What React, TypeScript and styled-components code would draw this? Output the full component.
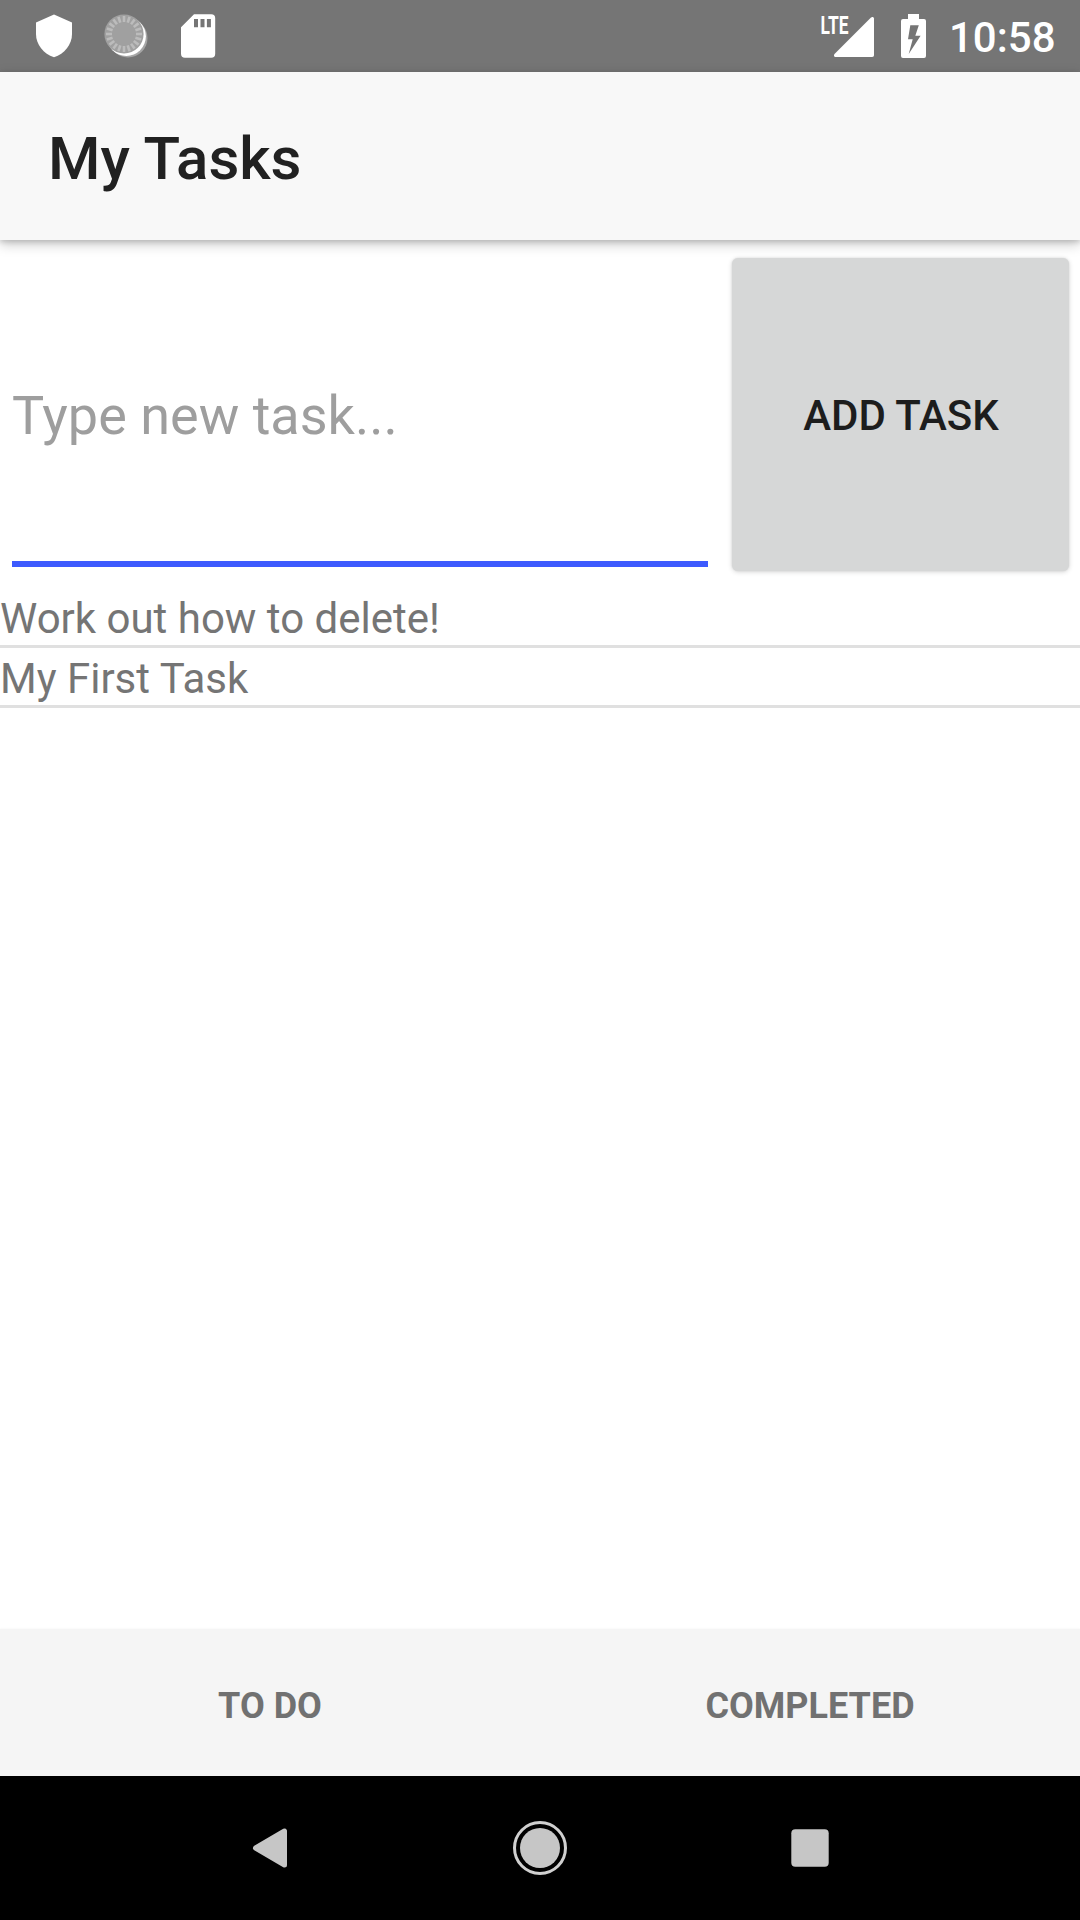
import React from 'react';
import styled, { createGlobalStyle } from 'styled-components';

const GlobalStyle = createGlobalStyle`
  * { box-sizing: border-box; }
  body { margin: 0; background: #fff; font-family: Roboto, sans-serif; }
`;

const Screen = styled.div`
  width: 1080px;
  height: 1920px;
  display: flex;
  flex-direction: column;
  overflow: hidden;
  background: #fff;
`;

const StatusBar = styled.div`
  flex: none;
  height: 72px;
  display: flex;
  justify-content: space-between;
  background: #757575;
`;

const StatusGroup = styled.div`
  display: flex;
  height: 72px;
`;

const Clock = styled.span`
  width: 138px;
  padding: 6px 0 0 7px;
  font-size: 42px;
  font-weight: 500;
  line-height: 63px;
  color: #fff;
`;

const AppBar = styled.header`
  flex: none;
  position: relative;
  z-index: 1;
  height: 168px;
  padding-left: 48px;
  background: #f8f8f8;
  box-shadow: 0 4px 12px rgba(0, 0, 0, 0.22), 0 2px 5px rgba(0, 0, 0, 0.14);
`;

const Title = styled.h1`
  margin: 0;
  padding-top: 3px;
  font-size: 60px;
  font-weight: 500;
  line-height: 168px;
  color: #212121;
`;

const Entry = styled.div`
  flex: none;
  display: flex;
  gap: 24px;
  height: 348px;
  padding: 18px 11px 17px 12px;
`;

const TaskInput = styled.input`
  width: 696px;
  height: 309px;
  padding: 12px 0 0;
  border: 0;
  border-bottom: 6px solid #3d5afe;
  border-radius: 0;
  outline: none;
  background: transparent;
  font: 400 54px Roboto, sans-serif;
  color: #212121;
  &::placeholder { color: #9e9e9e; opacity: 1; }
`;

const AddButton = styled.button`
  width: 337px;
  height: 313px;
  padding: 2px 0 0 1px;
  border: 0;
  border-radius: 6px;
  background: #d6d7d7;
  box-shadow: 0 1px 5px rgba(0, 0, 0, 0.16), 0 0 2px rgba(0, 0, 0, 0.1);
  font: 500 42px Roboto, sans-serif;
  color: #1d1d1d;
`;

const TaskList = styled.ul`
  flex: 1;
  margin: 0;
  padding: 0;
  list-style: none;
`;

const Task = styled.li`
  height: 60px;
  padding-top: 4px;
  border-bottom: 3px solid #e0e0e0;
  font-size: 42px;
  line-height: 53px;
  color: #757575;
`;

const TabBar = styled.nav`
  flex: none;
  display: flex;
  height: 147px;
  background: #f5f5f5;
  box-shadow: 0 0 2px rgba(0, 0, 0, 0.06);
`;

const Tab = styled.button`
  flex: 1;
  padding: 6px 0 0;
  border: 0;
  background: transparent;
  font: 700 36px Roboto, sans-serif;
  color: #717171;
`;

const NavBar = styled.div`
  flex: none;
  height: 144px;
  display: flex;
  justify-content: center;
  background: #000;
`;

const NavCell = styled.div`
  width: 270px;
  display: flex;
  align-items: center;
  justify-content: center;
`;

const TICKS = Array.from({ length: 20 }, (_, i) => i * 18);

const StatusLeft = () => (
  <svg width="240" height="72" viewBox="0 0 240 72">
    <path d="M54 14.6 36 22.4V34c0 10.5 7.5 20 18 23.2C64.500 54 72 44.500 72 34V22.400Z" fill="#fff" />
    <circle cx="128" cy="38" r="19.500" fill="#a6a6a6" />
    <circle cx="126.300" cy="36.300" r="19.600" fill="#fff" />
    <circle cx="124" cy="34" r="19.600" fill="#a0a0a0" />
    {TICKS.map((a) => (
      <path key={a} d="M124 16v6" stroke="#bcbcbc" strokeWidth="2.600" transform={`rotate(${a} 124 34)`} />
    ))}
    <path
      fillRule="evenodd"
      fill="#fff"
      d="M194 14.300h17.200a4 4 0 0 1 4 4V53.700a4 4 0 0 1-4 4H185a4 4 0 0 1-4-4V27.300ZM194 19v8.300h4V19Zm6.500 0v8.300h4V19Zm6.400 0v8.300h4V19Z"
    />
  </svg>
);

const StatusRight = () => (
  <svg width="130" height="72" viewBox="812 0 130 72">
    <text x="820.600" y="33.700" fill="#fff" fontFamily="Roboto, sans-serif" fontWeight="700" fontSize="26.500" textLength="28" lengthAdjust="spacingAndGlyphs">
      LTE
    </text>
    <path d="M835.500 57H872.200A1.800 1.800 0 0 0 874 55.200V18.500C874 16.900 872.200 16.400 871 17.500L834.500 54C833.400 55.200 834 57 835.500 57Z" fill="#fff" />
    <path
      fillRule="evenodd"
      fill="#fff"
      d="M908 14h11v5h5a2 2 0 0 1 2 2V56a2 2 0 0 1-2 2H903a2 2 0 0 1-2-2V21a2 2 0 0 1 2-2h5ZM910.300 25.300 908 39.300h4.700L908.700 54 920.600 35.700h-5.300L918.800 25.300Z"
    />
  </svg>
);

const tasks = ['Work out how to delete!', 'My First Task'];

export default function App() {
  return (
    <>
      <GlobalStyle />
      <Screen>
        <StatusBar>
          <StatusGroup>
            <StatusLeft />
          </StatusGroup>
          <StatusGroup>
            <StatusRight />
            <Clock>10:58</Clock>
          </StatusGroup>
        </StatusBar>
        <AppBar>
          <Title>My Tasks</Title>
        </AppBar>
        <Entry>
          <TaskInput placeholder="Type new task..." />
          <AddButton>ADD TASK</AddButton>
        </Entry>
        <TaskList>
          {tasks.map((t) => (
            <Task key={t}>{t}</Task>
          ))}
        </TaskList>
        <TabBar>
          <Tab>TO DO</Tab>
          <Tab>COMPLETED</Tab>
        </TabBar>
        <NavBar>
          <NavCell>
            <svg width="60" height="60" viewBox="240 1818 60 60">
              <path d="M255.500 1848 284.500 1831V1865Z" fill="#c6c6c6" stroke="#c6c6c6" strokeWidth="5" strokeLinejoin="round" />
            </svg>
          </NavCell>
          <NavCell>
            <svg width="60" height="60" viewBox="0 0 60 60">
              <circle cx="30" cy="30" r="25.500" fill="none" stroke="#d0d0d0" strokeWidth="3" />
              <circle cx="30" cy="30" r="20" fill="#c6c6c6" />
            </svg>
          </NavCell>
          <NavCell>
            <svg width="60" height="60" viewBox="0 0 60 60">
              <rect x="11.300" y="11.300" width="37.400" height="37.400" rx="4" fill="#c6c6c6" />
            </svg>
          </NavCell>
        </NavBar>
      </Screen>
    </>
  );
}
